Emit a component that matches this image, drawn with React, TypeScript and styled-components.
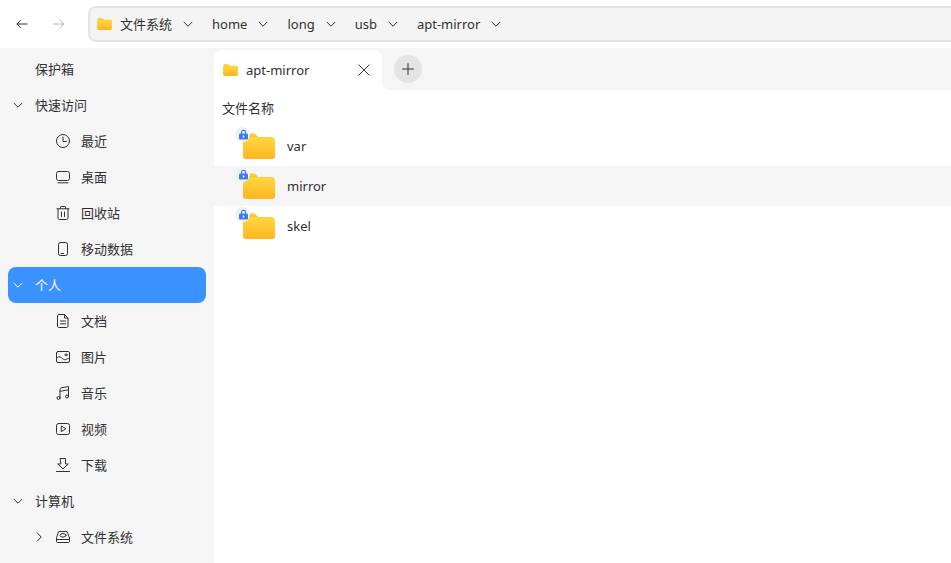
import React from 'react'
import styled, { createGlobalStyle } from 'styled-components'

const GlobalStyle = createGlobalStyle`
  html, body {
    margin: 0;
    padding: 0;
    height: 100%;
    overflow: hidden;
    background: #fff;
  }
  body {
    font-family: "Noto Sans", "Noto Sans CJK SC", sans-serif;
    font-size: 13px;
    color: #303030;
  }
  * {
    box-sizing: border-box;
  }
`

const Window = styled.div`
  width: 951px;
  height: 563px;
  display: flex;
  flex-direction: column;
  overflow: hidden;
`

const TopBar = styled.header`
  height: 48px;
  flex: none;
  display: flex;
  align-items: center;
  padding-left: 14px;
`

const NavButton = styled.button<{ $disabled?: boolean }>`
  width: 16px;
  height: 16px;
  padding: 0;
  margin-right: 21px;
  border: 0;
  background: none;
  display: flex;
  color: ${({ $disabled }) => ($disabled ? '#b4b4b4' : '#303030')};
`

const PathBar = styled.div`
  flex: 1;
  height: 36px;
  margin-right: -10px;
  display: flex;
  align-items: center;
  padding-left: 7px;
  background: #f4f4f4;
  border: 2px solid #e4e4e4;
  border-radius: 8px;
`

const Crumb = styled.div`
  display: flex;
  align-items: center;
  gap: 11px;
  margin-right: 19px;
  line-height: 18px;
  white-space: nowrap;
  svg {
    flex: none;
  }
`

const CrumbFolder = styled.span`
  display: flex;
  margin-right: 8px;
`

const Body = styled.div`
  flex: 1;
  min-height: 0;
  display: flex;
`

const Sidebar = styled.nav`
  width: 214px;
  flex: none;
  padding: 3px 8px 0;
  background: #f5f5f5;
`

const SideRow = styled.div<{ $selected?: boolean; $child?: boolean }>`
  height: 36px;
  display: flex;
  align-items: center;
  padding-left: ${({ $child }) => ($child ? '47px' : '27px')};
  border-radius: 8px;
  position: relative;
  background: ${({ $selected }) => ($selected ? '#3a92ff' : 'transparent')};
  color: ${({ $selected }) => ($selected ? '#fff' : '#303030')};
`

const SideLabel = styled.span`
  padding-bottom: 2px;
`

const Toggle = styled.span`
  position: absolute;
  left: 5px;
  top: 13px;
  display: flex;
`

const SubToggle = styled.span`
  position: absolute;
  left: 26px;
  top: 13px;
  display: flex;
`

const SideIcon = styled.span`
  width: 16px;
  height: 16px;
  display: flex;
  margin-right: 10px;
`

const Main = styled.main`
  flex: 1;
  min-width: 0;
  display: flex;
  flex-direction: column;
`

const TabStrip = styled.div`
  height: 42px;
  flex: none;
  display: flex;
`

const TabSlot = styled.div`
  width: 168px;
  flex: none;
  padding-top: 2px;
  background: #f5f5f5;
`

const Tab = styled.div`
  height: 40px;
  display: flex;
  align-items: center;
  padding: 0 10px 0 9px;
  gap: 8px;
  background: #fff;
  border-radius: 8px 8px 0 0;
`

const TabTitle = styled.span`
  flex: 1;
`

const TabRest = styled.div`
  flex: 1;
  display: flex;
  align-items: flex-start;
  padding: 7px 0 0 12px;
  background: #f5f5f5;
  border-bottom-left-radius: 8px;
`

const AddButton = styled.button`
  width: 28px;
  height: 28px;
  padding: 0;
  border: 0;
  border-radius: 50%;
  background: #e4e4e4;
  display: flex;
  align-items: center;
  justify-content: center;
  color: #303030;
`

const FileHeader = styled.div`
  height: 36px;
  flex: none;
  display: flex;
  align-items: center;
  padding: 0 0 2px 8px;
`

const FileRow = styled.div<{ $hover?: boolean }>`
  height: 40px;
  flex: none;
  display: flex;
  align-items: center;
  padding-left: 29px;
  gap: 12px;
  background: ${({ $hover }) => ($hover ? '#f5f5f5' : 'transparent')};
`

const FolderWrap = styled.span`
  width: 32px;
  height: 26px;
  display: flex;
  position: relative;
`

const LockBadge = styled.span`
  position: absolute;
  left: -8px;
  top: -6px;
  width: 15px;
  height: 15px;
  padding-left: 1px;
  border-radius: 50%;
  background: #eef2f8;
  display: flex;
  align-items: center;
  justify-content: center;
`

const FolderIcon = ({ size, height }: { size: number; height: number }) => {
  const id = `folder-${size}`
  return (
    <svg width={size} height={height} viewBox="0 0 32 26">
      <defs>
        <linearGradient id={id} x1="0" y1="0" x2="0" y2="1">
          <stop offset="0" stopColor="#ffd640" />
          <stop offset="1" stopColor="#ffb51e" />
        </linearGradient>
      </defs>
      <path d="M1 3.500C1 1.600 2 .5 4 .5h6.500c1.200 0 2 .5 2.800 1.400L15 4h13c2 0 3 1 3 3v4H1z" fill="#ffc533" />
      <path d="M0 7.500C0 5.600 1 4.500 3 4.500h26c2 0 3 1.100 3 3V23c0 1.900-1 3-3 3H3c-2 0-3-1.100-3-3z" fill={`url(#${id})`} />
    </svg>
  )
}

const Chevron = ({ down = true }: { down?: boolean }) => (
  <svg width="10" height="10" viewBox="0 0 10 10" fill="none" stroke="currentColor" strokeWidth="1">
    {down ? <path d="M.8 3 5 7.200 9.200 3" /> : <path d="M3 .6 7.200 5 3 9.400" />}
  </svg>
)

const Stroke = ({ children }: { children: React.ReactNode }) => (
  <svg width="16" height="16" viewBox="0 0 16 16" fill="none" stroke="currentColor" strokeWidth="1" strokeLinecap="round" strokeLinejoin="round">
    {children}
  </svg>
)

const icons: Record<string, React.ReactNode> = {
  recent: (
    <>
      <circle cx="8" cy="8" r="6.500" />
      <path d="M8 4v4.500h3.500" />
    </>
  ),
  desktop: (
    <>
      <rect x="1.500" y="2.500" width="13" height="9" rx="2" />
      <path d="M3 13.800h10" />
    </>
  ),
  trash: (
    <>
      <path d="M2 3.800h12M3 3.800V13c0 .9.600 1.500 1.500 1.500h7c.9 0 1.500-.6 1.500-1.500V3.800" />
      <path d="M5.500 3.500V2.200c0-.4.300-.7.700-.7h3.600c.4 0 .7.300.7.700v1.300M6.500 7v4.500M9.500 7v4.500" />
    </>
  ),
  mobile: (
    <>
      <rect x="3.500" y="1.500" width="9" height="13" rx="1.800" />
      <path d="M6 12.500h2.500" />
    </>
  ),
  doc: (
    <>
      <path d="M4 1.500h5.500l3.500 3.500v8c0 .9-.6 1.500-1.500 1.500h-7.500c-.9 0-1.500-.6-1.500-1.500V3c0-.9.600-1.500 1.500-1.500z" />
      <path d="M5.500 8h5M5.500 10.800h5M9.500 1.800V5h3.300" />
    </>
  ),
  image: (
    <>
      <rect x="1.500" y="2.500" width="13" height="11" rx="1.500" />
      <path d="M1.700 9.200c1.500-1.800 3-1.800 4.500-.7s2.500 2.700 4 2.200 2.500-1.500 4.200-1" />
      <circle cx="11" cy="5.800" r="1" />
    </>
  ),
  music: (
    <>
      <circle cx="3.500" cy="13" r="1.500" />
      <circle cx="12" cy="11.500" r="1.500" />
      <path d="M5 13V4.500c0-1 .5-1.500 1.300-1.700L13.500 1.500V11.500M5 6.300l8.500-1.500" />
    </>
  ),
  video: (
    <>
      <rect x="1.500" y="2.500" width="13" height="11" rx="2" />
      <path d="M6.300 5.300v5.400l4.200-2.700z" />
    </>
  ),
  download: (
    <>
      <path d="M5.500 1.500h5V7h2.800L8 11.800 2.700 7h2.800z" />
      <path d="M1.500 14.500h13" />
    </>
  ),
  disk: (
    <>
      <path d="M4 2.500h8l2.500 6.500v3.500c0 .6-.4 1-1 1h-11c-.6 0-1-.4-1-1V9z" />
      <path d="M1.500 10.500h13" />
      <ellipse cx="8" cy="6.300" rx="3" ry="1.800" />
    </>
  ),
}

interface SideItem {
  label: string
  icon?: string
  toggle?: boolean
  subToggle?: boolean
  selected?: boolean
}

const sideItems: SideItem[] = [
  { label: '保护箱' },
  { label: '快速访问', toggle: true },
  { label: '最近', icon: 'recent' },
  { label: '桌面', icon: 'desktop' },
  { label: '回收站', icon: 'trash' },
  { label: '移动数据', icon: 'mobile' },
  { label: '个人', toggle: true, selected: true },
  { label: '文档', icon: 'doc' },
  { label: '图片', icon: 'image' },
  { label: '音乐', icon: 'music' },
  { label: '视频', icon: 'video' },
  { label: '下载', icon: 'download' },
  { label: '计算机', toggle: true },
  { label: '文件系统', icon: 'disk', subToggle: true },
]

const crumbs = ['文件系统', 'home', 'long', 'usb', 'apt-mirror']
const files = ['var', 'mirror', 'skel']

export default function App() {
  return (
    <Window>
      <GlobalStyle />
      <TopBar>
        <NavButton aria-label="back">
          <Stroke>
            <path d="M13 8H3M6.500 4.500 3 8l3.500 3.500" />
          </Stroke>
        </NavButton>
        <NavButton aria-label="forward" $disabled>
          <Stroke>
            <path d="M3 8h10M9.500 4.500 13 8l-3.500 3.500" />
          </Stroke>
        </NavButton>
        <PathBar>
          <CrumbFolder>
            <FolderIcon size={15} height={12} />
          </CrumbFolder>
          {crumbs.map((crumb) => (
            <Crumb key={crumb}>
              {crumb}
              <Chevron />
            </Crumb>
          ))}
        </PathBar>
      </TopBar>
      <Body>
        <Sidebar>
          {sideItems.map((item) => (
            <SideRow key={item.label} $selected={item.selected} $child={!!item.icon}>
              {item.toggle && (
                <Toggle>
                  <Chevron />
                </Toggle>
              )}
              {item.subToggle && (
                <SubToggle>
                  <Chevron down={false} />
                </SubToggle>
              )}
              {item.icon && (
                <SideIcon>
                  <Stroke>{icons[item.icon]}</Stroke>
                </SideIcon>
              )}
              <SideLabel>{item.label}</SideLabel>
            </SideRow>
          ))}
        </Sidebar>
        <Main>
          <TabStrip>
            <TabSlot>
              <Tab>
                <FolderIcon size={15} height={12} />
                <TabTitle>apt-mirror</TabTitle>
                <Stroke>
                  <path d="M3 3l10 10M13 3 3 13" />
                </Stroke>
              </Tab>
            </TabSlot>
            <TabRest>
              <AddButton aria-label="new tab">
                <Stroke>
                  <path d="M8 2.500v11M2.500 8h11" />
                </Stroke>
              </AddButton>
            </TabRest>
          </TabStrip>
          <FileHeader>文件名称</FileHeader>
          {files.map((file) => (
            <FileRow key={file} $hover={file === 'mirror'}>
              <FolderWrap>
                <FolderIcon size={32} height={26} />
                <LockBadge>
                  <svg width="11" height="11" viewBox="0 0 11 11">
                    <path d="M3.500 5V3.400a2 2 0 0 1 4 0V5" fill="none" stroke="#3f7bf0" strokeWidth="1.200" />
                    <rect x="1" y="4.500" width="9" height="6" rx="1.200" fill="#3f7bf0" />
                    <rect x="4.800" y="6.500" width="1.400" height="2" fill="#fff" />
                  </svg>
                </LockBadge>
              </FolderWrap>
              {file}
            </FileRow>
          ))}
        </Main>
      </Body>
    </Window>
  )
}
